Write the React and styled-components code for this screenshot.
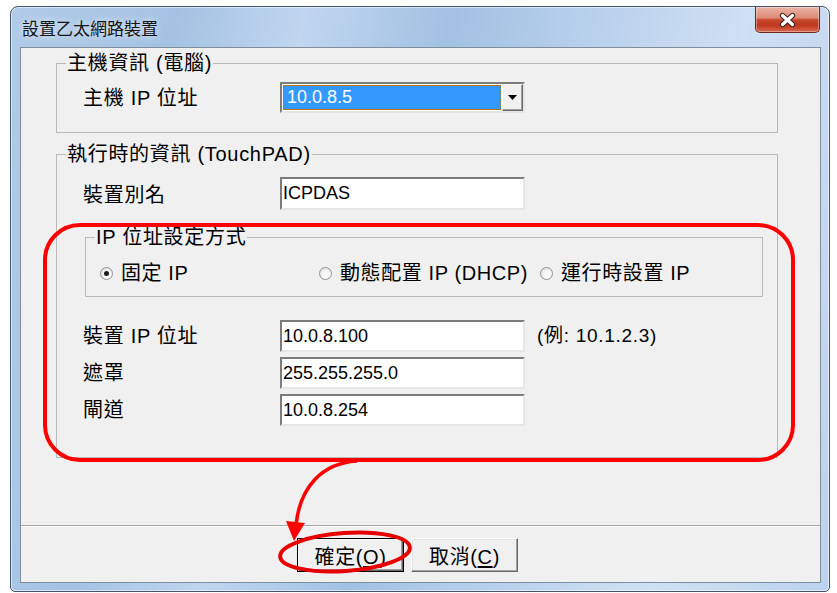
import React from 'react';
import styled, { createGlobalStyle, css } from 'styled-components';

const GlobalStyle = createGlobalStyle`
  html, body {
    margin: 0;
    padding: 0;
    background: #fff;
  }
  body {
    font-family: "Liberation Sans", "Noto Sans CJK TC", sans-serif;
    color: #000;
  }
  * {
    box-sizing: border-box;
  }
`;

const Stage = styled.div`
  position: relative;
  width: 837px;
  height: 593px;
  padding: 6px 0 0 10px;
`;

const Window = styled.div`
  width: 820px;
  height: 586px;
  display: flex;
  flex-direction: column;
  padding: 0 8px 8px 9px;
  border: 1px solid #46566a;
  border-radius: 8px 8px 5px 5px;
  background: linear-gradient(100deg, #b1cbe8 0%, #a4c2e3 18%, #c0d6ef 32%, #a2c1e3 48%, #b6cfeb 62%, #cfe0f3 80%, #bcd3ed 100%);
  box-shadow: inset 0 0 0 1px rgba(255, 255, 255, 0.55);
`;

const TitleBar = styled.div`
  height: 40px;
  margin: 0 -8px 0 -9px;
  padding: 0 9px 0 11px;
  display: flex;
  align-items: center;
  justify-content: space-between;
`;

const Title = styled.span`
  font-family: "Noto Sans CJK TC", sans-serif;
  font-size: 17px;
  line-height: 1;
  color: #141414;
  text-shadow: 0 0 7px rgba(255, 255, 255, 0.9);
`;

const CloseButton = styled.div`
  align-self: flex-start;
  width: 65px;
  height: 26px;
  display: flex;
  align-items: center;
  justify-content: center;
  border: 1px solid #6a2a20;
  border-top: none;
  border-radius: 0 0 5px 5px;
  background: linear-gradient(#ebb3a6 0%, #de8d79 42%, #c6462d 52%, #bf3920 74%, #d8694f 100%);
  box-shadow: inset 0 0 0 1px rgba(255, 255, 255, 0.35);
`;

const Client = styled.div`
  flex: 1;
  display: flex;
  flex-direction: column;
  background: #f0f0f0;
  border: 1px solid #7f8d9c;
`;

const Body = styled.div`
  flex: 1;
  padding: 4px 42px 0 35px;
`;

const Group = styled.fieldset`
  margin: ${p => p.$top || 0}px 0 0 ${p => p.$indent || 0}px;
  padding: ${p => p.$pad};
  border: 1px solid #b9b9b9;
  min-width: 0;
`;

const Caption = styled.legend`
  margin-left: ${p => p.$shift}px;
  padding: 0 1px;
  font-size: 20px;
  line-height: 22px;
  letter-spacing: 0.7px;
`;

const FieldGrid = styled.div`
  display: grid;
  grid-template-columns: 197px 245px auto;
  grid-auto-rows: ${p => p.$row || 32}px;
  row-gap: 5px;
  align-items: center;
  margin-top: ${p => p.$top || 0}px;
`;

const Label = styled.span`
  font-size: 20px;
  line-height: 22px;
  letter-spacing: 0.7px;
  white-space: nowrap;
  padding-top: ${p => p.$drop || 0}px;
`;

const Hint = styled(Label)`
  margin-left: 12px;
  font-size: 19px;
`;

const sunken = css`
  border: 2px solid;
  border-color: #7c7c7c #e6e6e6 #e6e6e6 #7c7c7c;
`;

const TextBox = styled.input`
  ${sunken};
  width: 245px;
  height: 100%;
  margin: 0;
  padding: 0 0 0 1px;
  background: #fff;
  font-family: inherit;
  font-size: 18px;
  color: #000;
  outline: none;
`;

const Combo = styled.div`
  ${sunken};
  width: 245px;
  height: 31px;
  display: flex;
  background: #fff;
`;

const Selection = styled.div`
  flex: 1;
  margin: 1px;
  padding-left: 3px;
  display: flex;
  align-items: center;
  background: #3399ff;
  border: 1px dotted #b0700f;
  color: #fff;
  font-size: 18px;
`;

const DropButton = styled.div`
  width: 21px;
  display: flex;
  align-items: center;
  justify-content: center;
  background: #f0f0f0;
  border: 1px solid;
  border-color: #f8f8f8 #6a6a6a #6a6a6a #f8f8f8;
  box-shadow: inset -1px -1px 0 #a0a0a0;
`;

const RadioRow = styled.div`
  display: grid;
  grid-template-columns: 219px 221px auto;
  height: 22px;
  align-items: center;
`;

const RadioItem = styled.label`
  display: flex;
  align-items: center;
  gap: 8px;
  font-size: 20px;
  line-height: 22px;
  letter-spacing: 0.6px;
  white-space: nowrap;
`;

const RadioDot = styled.span`
  width: 13px;
  height: 13px;
  flex: none;
  display: flex;
  align-items: center;
  justify-content: center;
  border-radius: 50%;
  border: 1px solid #8f9293;
  background: radial-gradient(circle at 60% 65%, #ffffff 0%, #f4f4f4 45%, #d3d3d3 100%);

  &::after {
    content: "";
    width: 5px;
    height: 5px;
    border-radius: 50%;
    background: #1c1c1c;
    display: ${p => (p.$on ? 'block' : 'none')};
  }
`;

const Footer = styled.div`
  height: 57px;
  display: flex;
  gap: 7px;
  padding: 12px 0 0 276px;
  border-top: 1px solid #a7a7a7;
  box-shadow: inset 0 1px 0 #fff;
`;

const Button = styled.button`
  width: 107px;
  height: 34px;
  margin: 0;
  padding: 0;
  font-family: inherit;
  font-size: 20px;
  letter-spacing: 0.6px;
  color: #000;
  background: #f0f0f0;
  border: 1px solid;
  border-color: #ffffff #696969 #696969 #ffffff;
  box-shadow: inset -1px -1px 0 #a0a0a0, inset 1px 1px 0 #e3e3e3;

  ${p => p.$default && css`
    border-color: #000;
    box-shadow: inset 1px 1px 0 #fff, inset -1px -1px 0 #696969, inset -2px -2px 0 #a0a0a0;
  `}

  u {
    text-underline-offset: 2px;
  }
`;

const Overlay = styled.svg`
  position: absolute;
  top: 0;
  left: 0;
  pointer-events: none;
`;

function CloseGlyph() {
  return (
    <svg width="17" height="16" viewBox="0 0 17 16">
      <path d="M3.5 3.5 L13.5 12.5 M13.5 3.5 L3.5 12.5" stroke="#3b2420" strokeWidth="5.4" strokeLinecap="round" />
      <path d="M3.5 3.5 L13.5 12.5 M13.5 3.5 L3.5 12.5" stroke="#ffffff" strokeWidth="3.2" strokeLinecap="round" />
    </svg>
  );
}

function Radio({ on, children }) {
  return (
    <RadioItem>
      <RadioDot $on={on} />
      {children}
    </RadioItem>
  );
}

export default function App() {
  return (
    <Stage>
      <GlobalStyle />
      <Window>
        <TitleBar>
          <Title>設置乙太網路裝置</Title>
          <CloseButton>
            <CloseGlyph />
          </CloseButton>
        </TitleBar>
        <Client>
          <Body>
            <Group $pad="8px 14px 19px 26px">
              <Caption $shift={-17}>主機資訊 (電腦)</Caption>
              <FieldGrid $row={31}>
                <Label>主機 IP 位址</Label>
                <Combo>
                  <Selection>10.0.8.5</Selection>
                  <DropButton>
                    <svg width="9" height="5" viewBox="0 0 9 5">
                      <path d="M0 0 H9 L4.5 5 Z" fill="#000" />
                    </svg>
                  </DropButton>
                </Combo>
              </FieldGrid>
            </Group>

            <Group $top={10} $pad="12px 14px 31px 26px">
              <Caption $shift={-17}>執行時的資訊 (TouchPAD)</Caption>
              <FieldGrid $row={33}>
                <Label $drop={3}>裝置別名</Label>
                <TextBox defaultValue="ICPDAS" readOnly />
              </FieldGrid>

              <Group $top={16} $indent={2} $pad="14px 14px 12px 14px">
                <Caption $shift={-5}>IP 位址設定方式</Caption>
                <RadioRow>
                  <Radio on>固定 IP</Radio>
                  <Radio>動態配置 IP (DHCP)</Radio>
                  <Radio>運行時設置 IP</Radio>
                </RadioRow>
              </Group>

              <FieldGrid $top={23}>
                <Label>裝置 IP 位址</Label>
                <TextBox defaultValue="10.0.8.100" readOnly />
                <Hint>(例: 10.1.2.3)</Hint>
                <Label>遮罩</Label>
                <TextBox defaultValue="255.255.255.0" readOnly />
                <span />
                <Label>閘道</Label>
                <TextBox defaultValue="10.0.8.254" readOnly />
                <span />
              </FieldGrid>
            </Group>
          </Body>
          <Footer>
            <Button $default>確定(<u>O</u>)</Button>
            <Button>取消(<u>C</u>)</Button>
          </Footer>
        </Client>
      </Window>

      <Overlay width="837" height="593" viewBox="0 0 837 593">
        <rect x="45" y="225" width="748" height="235" rx="35" fill="none" stroke="#ff0000" strokeWidth="4" />
        <path d="M357 461 C 322 463, 300 487, 296 525" fill="none" stroke="#ff0000" strokeWidth="3.5" />
        <polygon points="286,521 305,523 294,541" fill="#ff0000" />
        <ellipse cx="345" cy="552" rx="65" ry="19" transform="rotate(-4 345 552)" fill="none" stroke="#e80000" strokeWidth="4" />
      </Overlay>
    </Stage>
  );
}
